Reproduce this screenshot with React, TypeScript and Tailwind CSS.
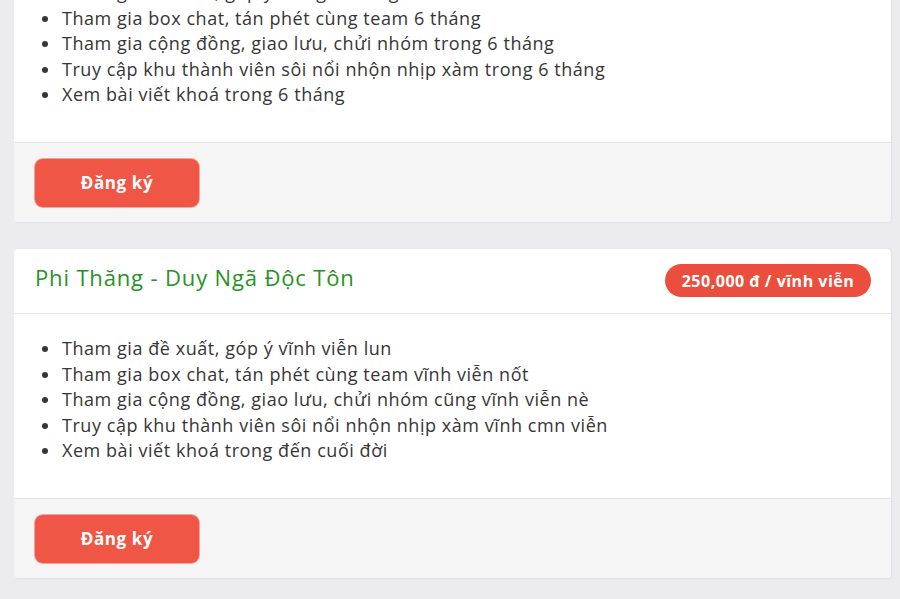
import React from 'react';

const font = { fontFamily: '"Open Sans", "Noto Sans", sans-serif' };

function Footer() {
  return (
    <div className="bg-[#f5f5f6] border-t border-[#e6e6ea] border-b border-b-[#e2e2e8] px-[21px] pt-[16px] pb-[15px] rounded-b">
      <button className="w-[164px] h-[48px] rounded-lg bg-[#ef5646] text-white font-bold text-[17px] tracking-[0.6px] shadow-[0_0_0_1px_#f3a79c]">
        Đăng ký
      </button>
    </div>
  );
}

function Perks({ items }: { items: string[] }) {
  return (
    <ul className="list-disc pl-[47px] text-[18px] leading-[25.6px] tracking-[0.55px] text-[#363636]">
      {items.map((t) => (
        <li key={t} className="pl-[1px]">{t}</li>
      ))}
    </ul>
  );
}

export default function App() {
  return (
    <div className="w-[900px] h-[599px] overflow-hidden bg-[#ebebf0]" style={font}>
      {/* top card, header scrolled out of view */}
      <div className="ml-[14px] w-[877px] bg-white rounded-b shadow-[1px_0_2px_rgba(0,0,0,0.05)] -mt-[20px]">
        <div className="pb-[34px]">
          <Perks
            items={[
              'Tham gia đề xuất, góp ý trong 6 tháng',
              'Tham gia box chat, tán phét cùng team 6 tháng',
              'Tham gia cộng đồng, giao lưu, chửi nhóm trong 6 tháng',
              'Truy cập khu thành viên sôi nổi nhộn nhịp xàm trong 6 tháng',
              'Xem bài viết khoá trong 6 tháng',
            ]}
          />
        </div>
        <Footer />
      </div>

      <div className="mt-[26px] ml-[14px] w-[877px] bg-white rounded shadow-[1px_0_2px_rgba(0,0,0,0.05)]">
        <div className="h-[65px] flex items-center justify-between pl-[21px] pr-[20px] border-b border-[#e8e8ec]">
          <div className="text-[22px] font-medium tracking-[0.85px] text-[#279227] -mt-[6px]">Phi Thăng - Duy Ngã Độc Tôn</div>
          <div className="h-[33px] w-[206px] rounded-full bg-[#ea4f3e] text-white font-bold text-[16px] tracking-[0.5px] flex items-center justify-center">
            250,000 đ / vĩnh viễn
          </div>
        </div>
        <div className="pt-[22px] pb-[34px]">
          <Perks
            items={[
              'Tham gia đề xuất, góp ý vĩnh viễn lun',
              'Tham gia box chat, tán phét cùng team vĩnh viễn nốt',
              'Tham gia cộng đồng, giao lưu, chửi nhóm cũng vĩnh viễn nè',
              'Truy cập khu thành viên sôi nổi nhộn nhịp xàm vĩnh cmn viễn',
              'Xem bài viết khoá trong đến cuối đời',
            ]}
          />
        </div>
        <Footer />
      </div>
    </div>
  );
}
